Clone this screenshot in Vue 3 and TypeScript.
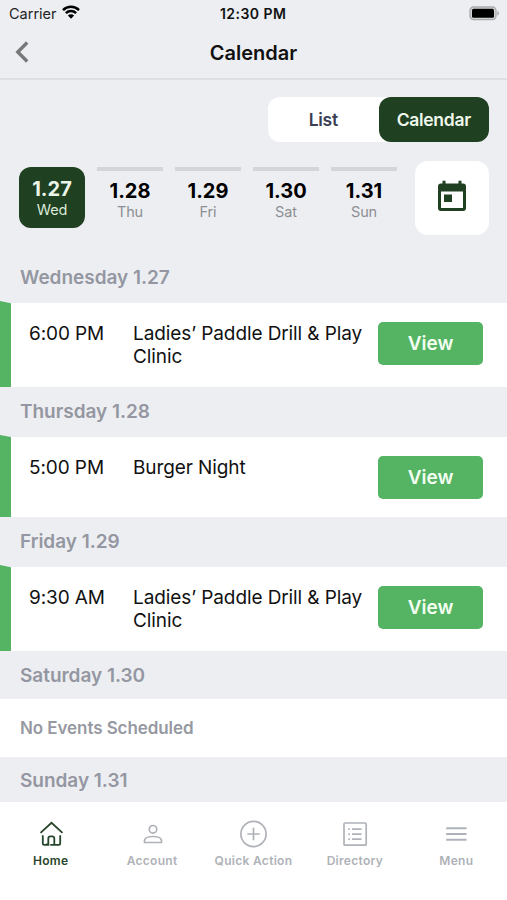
<script setup lang="ts">
import { ref } from 'vue'

interface Day { date: string; name: string }
interface ClubEvent { time: string; title: string }
interface Section { label: string; kind: string; events: ClubEvent[]; empty?: string }

const days: Day[] = [
  { date: '1.27', name: 'Wed' },
  { date: '1.28', name: 'Thu' },
  { date: '1.29', name: 'Fri' },
  { date: '1.30', name: 'Sat' },
  { date: '1.31', name: 'Sun' },
]

const sections: Section[] = [
  { label: 'Wednesday 1.27', kind: 'wed', events: [{ time: '6:00 PM', title: 'Ladies’ Paddle Drill & Play Clinic' }] },
  { label: 'Thursday 1.28', kind: 'thu', events: [{ time: '5:00 PM', title: 'Burger Night' }] },
  { label: 'Friday 1.29', kind: 'fri', events: [{ time: '9:30 AM', title: 'Ladies’ Paddle Drill & Play Clinic' }] },
  { label: 'Saturday 1.30', kind: 'sat', events: [], empty: 'No Events Scheduled' },
  { label: 'Sunday 1.31', kind: 'sun', events: [] },
]

const tabs: string[] = ['Home', 'Account', 'Quick Action', 'Directory', 'Menu']
const selected = ref(0)
const activeTab = ref('Home')
</script>

<template>
  <div class="screen">
    <header class="top">
      <div class="status">
        <span class="carrier">Carrier</span>
        <svg class="wifi" width="18" height="14" viewBox="0 0 18 14">
          <g fill="none" stroke="#000" stroke-width="2.5">
            <path d="M1 5.1a11.4 11.4 0 0 1 16 0" />
            <path d="M3.9 8.1a7.2 7.2 0 0 1 10.2 0" />
          </g>
          <path d="M9 13.7 5.9 10.5a4.4 4.4 0 0 1 6.2 0z" />
        </svg>
        <span class="clock">12:30 PM</span>
        <svg class="battery" width="31" height="15" viewBox="0 0 31 15">
          <rect x="1" y="1" width="26" height="12.6" rx="3.6" fill="#d3d4d6" stroke="#a9aaad" stroke-width="1.3" />
          <rect x="3" y="2.8" width="22" height="9" rx="1.6" />
          <path d="M28.3 5v4.6q1.7-.6 1.7-2.3T28.3 5z" fill="#a9aaad" />
        </svg>
      </div>
      <div class="titlebar">
        <svg class="back" width="14" height="22" viewBox="0 0 14 22">
          <path d="M12.2 1.5 2.8 11l9.4 9.5" fill="none" stroke="#77787a" stroke-width="3.4" />
        </svg>
        <h1>Calendar</h1>
      </div>
    </header>

    <div class="modes">
      <div class="toggle">
        <button class="mode">List</button>
        <button class="mode on">Calendar</button>
      </div>
    </div>

    <div class="picker">
      <div class="days">
        <button
          v-for="(day, i) in days"
          :key="day.date"
          class="day"
          :class="{ active: i === selected }"
          @click="selected = i"
        >
          <span class="date">{{ day.date }}</span>
          <span class="name">{{ day.name }}</span>
        </button>
      </div>
      <button class="open">
        <svg width="28" height="32" viewBox="0 0 28 32">
          <path fill="#204022" fill-rule="evenodd" d="M4.500.8h3V3.500h13V.8h3V3.500H25a3 3 0 0 1 3 3V28a3 3 0 0 1-3 3H3a3 3 0 0 1-3-3V6.500a3 3 0 0 1 3-3h1.500zM3 11.500V28h22V11.500z" />
          <rect x="6" y="14.500" width="8" height="7.500" fill="#204022" />
        </svg>
      </button>
    </div>

    <main class="agenda">
      <section v-for="s in sections" :key="s.label" :class="s.kind">
        <h2><span>{{ s.label }}</span></h2>
        <div v-for="e in s.events" :key="e.title" class="event">
          <svg class="stripe" width="11" height="86" viewBox="0 0 11 86" preserveAspectRatio="none">
            <path d="M0 0 11 2.200V86H0z" fill="#55b364" />
          </svg>
          <span class="time">{{ e.time }}</span>
          <span class="title">{{ e.title }}</span>
          <button class="view">View</button>
        </div>
        <p v-if="s.empty" class="empty">{{ s.empty }}</p>
      </section>
    </main>

    <nav class="tabs">
      <button
        v-for="tab in tabs"
        :key="tab"
        class="tab"
        :class="{ current: tab === activeTab }"
        @click="activeTab = tab"
      >
        <svg width="28" height="28" viewBox="0 0 28 28" fill="none" stroke="currentColor" stroke-width="1.7">
          <template v-if="tab === 'Home'">
            <path d="M3.500 12.900 14.500 2.800l11 10.100" stroke-width="1.800" />
            <path d="M5.800 15.200v8.300q0 1.300 1.300 1.300h1.500q1.300 0 1.300-1.300M23.200 15.200v8.300q0 1.300-1.300 1.300h-8.600M11.300 24.800v-6.300q0-2.200 2.200-2.200h1.600q2.200 0 2.200 2.200v6.300M7.100 24.800h5.200M17 24.800h4.900" stroke-width="1.800" />
          </template>
          <template v-else-if="tab === 'Account'">
            <circle cx="15" cy="9.300" r="3.800" />
            <path d="M6.500 22.500v-1.700c0-3 4.500-4.300 8.500-4.300s8.500 1.300 8.500 4.300v1.700z" />
          </template>
          <template v-else-if="tab === 'Quick Action'">
            <circle cx="14.500" cy="14" r="12.600" />
            <path d="M14.500 7.800v12.400M8.300 14h12.400" />
          </template>
          <template v-else-if="tab === 'Directory'">
            <rect x="3" y="3" width="22.200" height="22.200" rx="1" />
            <path d="M11 9.200h9.500M11 14.200h9.500M11 19.200h9.500M7.300 9.200h1.600M7.300 14.200h1.600M7.300 19.200h1.600" />
          </template>
          <path v-else d="M4.200 8.300h20.300M4.200 14h20.300M4.200 19.700h20.300" stroke-width="2" />
        </svg>
        <span>{{ tab }}</span>
      </button>
    </nav>
  </div>
</template>

<style>
body { margin: 0; }
</style>

<style scoped>
* { box-sizing: border-box; }
.screen {
  width: 507px;
  height: 900px;
  display: flex;
  flex-direction: column;
  overflow: hidden;
  background: #edeef2;
  font-family: Inter, "Liberation Sans", sans-serif;
  color: #111;
}
button { border: 0; padding: 0; margin: 0; background: none; font: inherit; color: inherit; }
h1, h2, p { margin: 0; }
.top { height: 80px; flex: none; border-bottom: 2px solid #dedfe2; }
.status {
  height: 28px;
  display: grid;
  grid-template-columns: 52px 148px 107px 1fr;
  align-items: center;
  padding: 0 7px 0 9px;
  font-size: 14.5px;
}
.carrier { color: #222; white-space: nowrap; margin-top: -2px; }
.wifi { margin: -4px 0 0 1px; }
.clock { font-weight: 600; font-size: 14px; letter-spacing: .45px; white-space: nowrap; margin: -2px 0 0 11px; }
.battery { justify-self: end; margin-top: -1px; }
.titlebar { height: 50px; display: grid; grid-template-columns: 60px 1fr 60px; align-items: center; }
.back { margin: -2px 0 0 15px; }
h1 { font-size: 20px; line-height: 26px; font-weight: 600; text-align: center; margin-top: -1px; }
.modes { height: 62px; flex: none; display: flex; justify-content: flex-end; padding: 17px 18px 0 0; }
.toggle { display: flex; width: 221px; height: 45px; background: #fff; border-radius: 12px; }
.mode { flex: 1; font-size: 17.5px; font-weight: 600; letter-spacing: -.3px; color: #3b3f54; }
.mode.on { background: #204022; color: #eff8ec; border-radius: 12px; }
.picker { height: 111px; flex: none; display: flex; justify-content: space-between; padding: 19px 18px 0 19px; }
.days { display: flex; gap: 12px; padding-top: 6px; }
.day { width: 66px; height: 61px; display: flex; flex-direction: column; align-items: center; border-top: 4px solid #d3d5d8; padding-top: 8px; }
.date { font-size: 20px; line-height: 25px; font-weight: 700; color: #000; }
.name { font-size: 14.500px; line-height: 17px; margin-top: -1px; color: #8c8e93; letter-spacing: -.1px; }
.day.active { border: 0; border-radius: 12px; background: #204022; padding-top: 10px; }
.active .date { color: #eaf5e8; }
.active .name { color: #dcead9; }
.open { width: 74px; height: 74px; border-radius: 13px; background: #fff; display: flex; align-items: center; justify-content: center; padding-bottom: 5px; }
.agenda { height: 549px; flex: none; overflow: hidden; }
h2 { height: 50px; padding: 13px 0 0 20px; font-size: 19px; line-height: 24px; font-weight: 600; letter-spacing: -.03px; color: #9497a1; }
.sat h2 { height: 48px; }
.sun h2 { padding-top: 12px; }
.event { height: 84px; background: #fff; display: grid; grid-template-columns: 29px 104px 245px 104px; position: relative; }
.thu .event { height: 80px; }
.stripe { position: absolute; left: 0; top: -2px; height: calc(100% + 2px); }
.time { grid-column: 2; padding-top: 19px; font-size: 19px; line-height: 23px; letter-spacing: -.1px; }
.title { padding-top: 19px; font-size: 19px; line-height: 23px; letter-spacing: -.1px; width: 240px; }
.view { width: 105px; height: 43px; margin-top: 19px; border-radius: 5px; background: #55b364; color: #f3fff1; font-size: 19px; font-weight: 600; }
.empty { height: 58px; padding-left: 20px; background: #fff; font-size: 17px; line-height: 58px; font-weight: 600; letter-spacing: -.08px; color: #9699a2; }
.tabs { height: 98px; flex: none; display: grid; grid-template-columns: repeat(5, 1fr); background: #fff; }
.tab { display: flex; flex-direction: column; align-items: center; padding-top: 18px; color: #afb2b8; font-size: 12px; line-height: 16px; font-weight: 600; letter-spacing: .3px; }
.tab svg { margin-bottom: 5px; }
.tab span { white-space: nowrap; }
.tab.current { color: #27452b; }
</style>
